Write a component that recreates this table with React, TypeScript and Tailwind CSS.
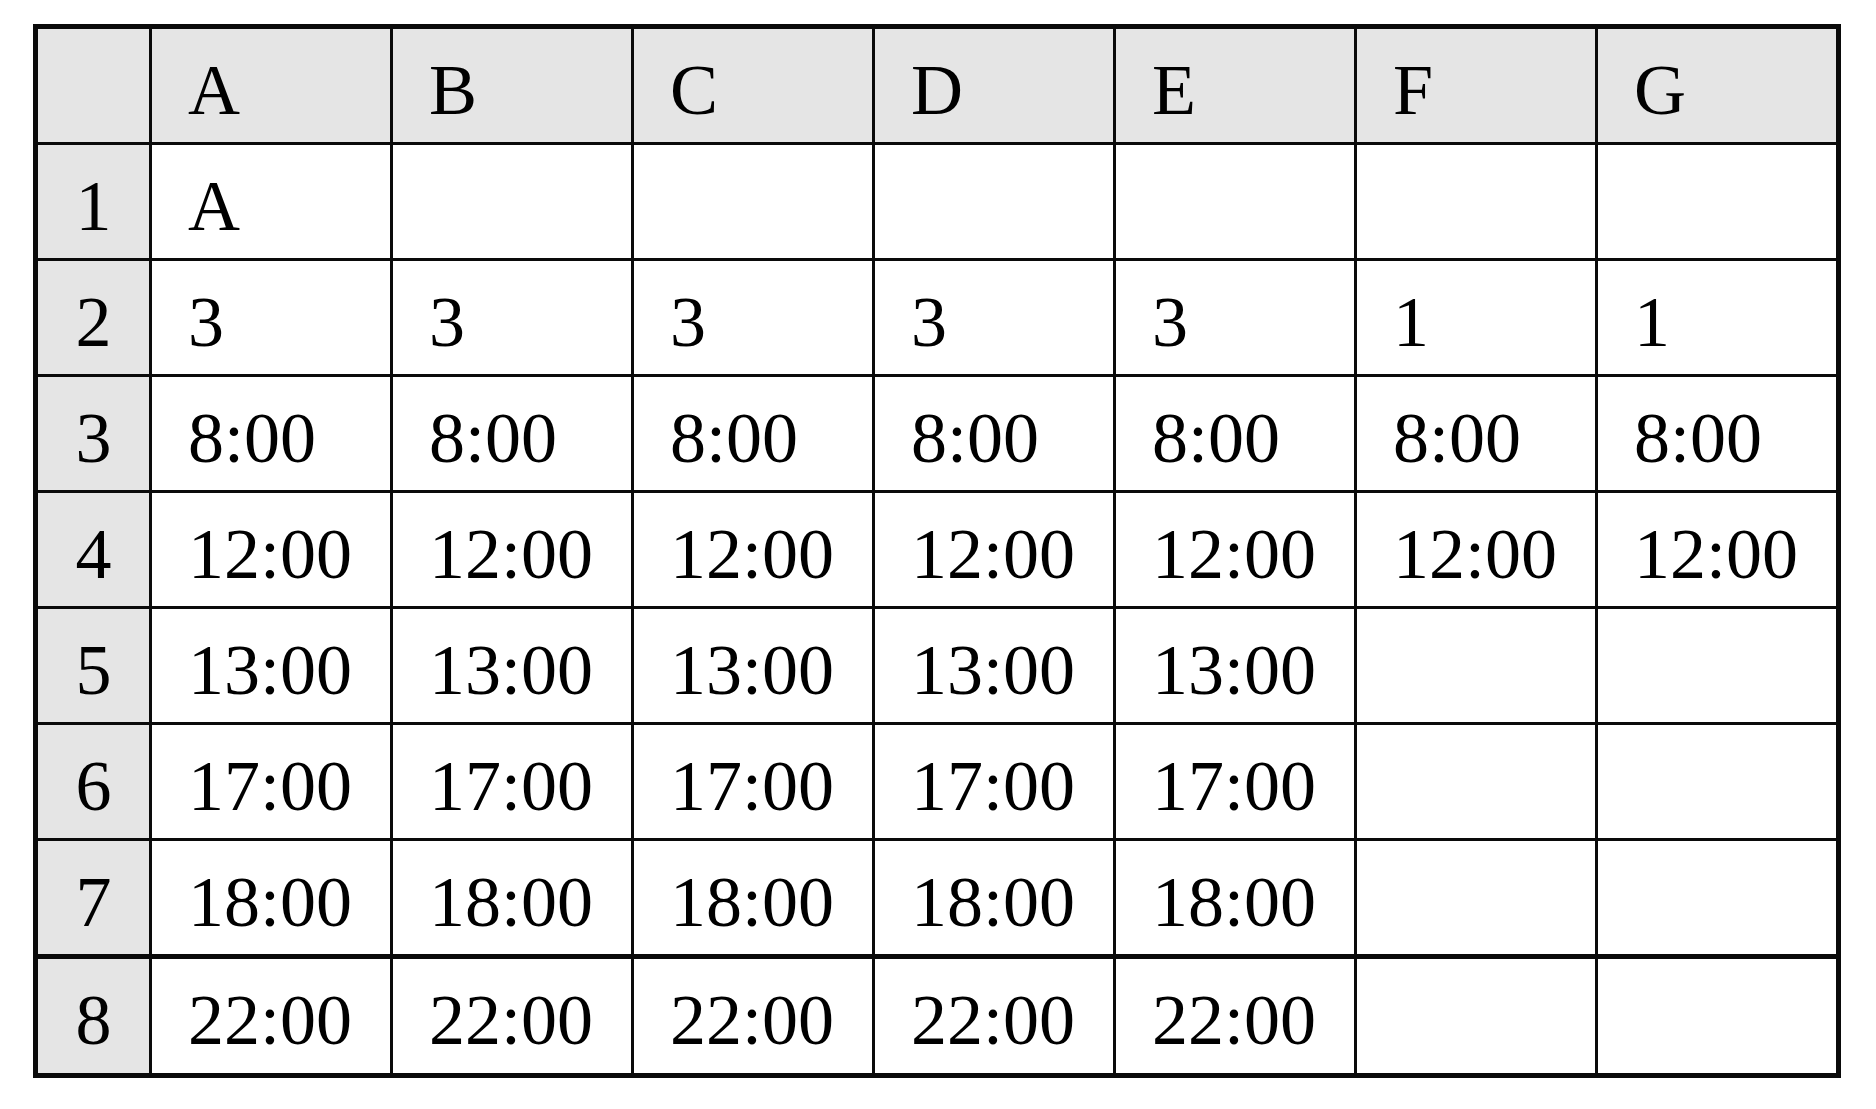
const columns = ['A', 'B', 'C', 'D', 'E', 'F', 'G'];

const rows: string[][] = [
  ['A', '', '', '', '', '', ''],
  ['3', '3', '3', '3', '3', '1', '1'],
  ['8:00', '8:00', '8:00', '8:00', '8:00', '8:00', '8:00'],
  ['12:00', '12:00', '12:00', '12:00', '12:00', '12:00', '12:00'],
  ['13:00', '13:00', '13:00', '13:00', '13:00', '', ''],
  ['17:00', '17:00', '17:00', '17:00', '17:00', '', ''],
  ['18:00', '18:00', '18:00', '18:00', '18:00', '', ''],
  ['22:00', '22:00', '22:00', '22:00', '22:00', '', ''],
];

function HeaderCell({ text, center }: { text: string; center?: boolean }) {
  return (
    <div
      className={`bg-[#e5e5e5] flex items-center pt-2 ${center ? 'justify-center' : 'pl-[36px]'}`}
    >
      {text}
    </div>
  );
}

export default function App() {
  return (
    <div className="min-h-screen bg-white pt-[24px] pl-[33px]">
      <div
        className="inline-grid grid-cols-[111px_repeat(7,238px)] grid-rows-[113px_repeat(7,113px)_116px] gap-[3px] bg-[#0a0a0a] p-[5px] text-black text-[72px] leading-none"
        style={{ fontFamily: '"Liberation Serif", "Times New Roman", serif' }}
      >
        <HeaderCell text="" center />
        {columns.map((c) => (
          <HeaderCell key={c} text={c} />
        ))}

        {rows.map((row, i) => (
          <div key={i} className="contents">
            <div
              className={`bg-[#e5e5e5] flex items-center justify-center pt-2 ${i === 7 ? 'border-t-2 border-[#0a0a0a]' : ''}`}
            >
              {i + 1}
            </div>
            {row.map((val, j) => (
              <div
                key={j}
                className={`bg-white flex items-center pl-[36px] pt-2 ${i === 7 ? 'border-t-2 border-[#0a0a0a]' : ''}`}
              >
                {val}
              </div>
            ))}
          </div>
        ))}
      </div>
    </div>
  );
}
